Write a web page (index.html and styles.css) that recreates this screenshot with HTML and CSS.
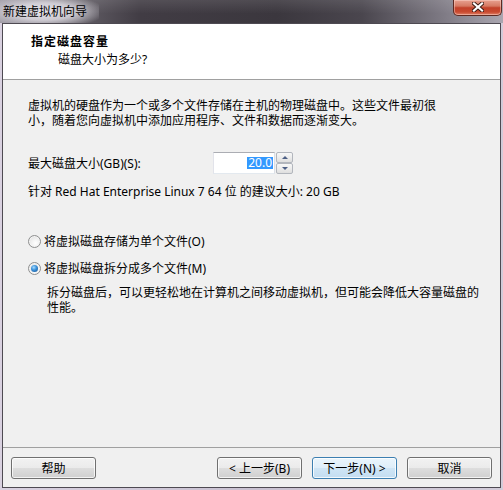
FILE: index.html
```html
<!DOCTYPE html>
<html lang="zh-CN">
<head>
<meta charset="utf-8">
<title>新建虚拟机向导</title>
<link rel="stylesheet" href="styles.css">
</head>
<body>
<div class="window">
  <div class="titlebar">
    <div class="title">新建虚拟机向导</div>
    <div class="close">
      <svg width="12" height="10" viewBox="0 0 12 10">
        <path d="M2 1.5 L10 8.5 M10 1.5 L2 8.5" stroke="#3a1a14" stroke-width="4" stroke-linecap="square"/>
        <path d="M2 1.5 L10 8.5 M10 1.5 L2 8.5" stroke="#ffffff" stroke-width="2.2" stroke-linecap="square"/>
      </svg>
    </div>
  </div>
  <div class="client">
    <div class="header">
      <div class="h-title">指定磁盘容量</div>
      <div class="h-sub">磁盘大小为多少?</div>
    </div>
    <div class="content">
      <p class="para">虚拟机的硬盘作为一个或多个文件存储在主机的物理磁盘中。这些文件最初很<br>小，随着您向虚拟机中添加应用程序、文件和数据而逐渐变大。</p>
      <div class="size-row">
        <span class="size-label">最大磁盘大小(GB)(S):</span>
        <div class="spinner">
          <div class="spin-input"><span class="sel">20.0</span></div>
          <div class="spin-btns">
            <div class="sb"><span class="arrow up"></span></div>
            <div class="sb"><span class="arrow down"></span></div>
          </div>
        </div>
      </div>
      <p class="hint">针对 Red Hat Enterprise Linux 7 64 位 的建议大小: 20 GB</p>
      <div class="opt opt-first"><span class="radio"></span><span>将虚拟磁盘存储为单个文件(O)</span></div>
      <div class="opt opt-second"><span class="radio checked"></span><span>将虚拟磁盘拆分成多个文件(M)</span></div>
      <p class="desc">拆分磁盘后，可以更轻松地在计算机之间移动虚拟机，但可能会降低大容量磁盘的<br>性能。</p>
    </div>
    <div class="footer">
      <button class="btn help">帮助</button>
      <button class="btn">&lt; 上一步(B)</button>
      <button class="btn default">下一步(N) &gt;</button>
      <button class="btn">取消</button>
    </div>
  </div>
</div>
</body>
</html>
```

FILE: styles.css
```css
html, body {
  margin: 0;
  padding: 0;
}

body {
  font-family: "Noto Sans", "Noto Sans CJK SC", sans-serif;
  font-size: 12px;
  line-height: 15px;
  color: #000;
  background: #cfc8d6;
}

.window {
  width: 503px;
  height: 490px;
  box-sizing: border-box;
  padding: 0 2px 2px 2px;
  display: flex;
  flex-direction: column;
  background: linear-gradient(90deg, #d9d1e0 0%, #c9c1d1 50%, #d2cbd8 100%);
}

.titlebar {
  height: 23px;
  margin: 0 -2px;
  padding-right: 1px;
  display: flex;
  align-items: flex-start;
  background:
    linear-gradient(180deg, rgba(255,255,255,0.10) 0%, rgba(255,255,255,0) 60%),
    linear-gradient(90deg, #9c98a2 0%, #6c6870 12%, #413c44 28%, #3b373e 55%, #4a464e 72%, #7e7a84 88%, #aaa6b0 100%);
}

.title {
  height: 23px;
  box-sizing: border-box;
  padding: 4px 12px 0 3px;
  color: #000;
  background: radial-gradient(ellipse 62% 75% at 45% 50%, rgba(236,234,240,0.97) 0%, rgba(226,223,230,0.8) 50%, rgba(210,206,214,0) 100%);
}

.close {
  margin-left: auto;
  width: 49px;
  height: 16px;
  box-sizing: border-box;
  border: 1px solid #5e2a22;
  border-top: none;
  border-radius: 0 0 5px 5px;
  display: flex;
  align-items: center;
  justify-content: center;
  padding-bottom: 2px;
  background: linear-gradient(180deg, #e7a190 0%, #d67a63 40%, #c2412a 52%, #c94a30 80%, #e0836a 100%);
  box-shadow: inset 0 0 0 1px rgba(255,220,210,0.45);
}

.client {
  flex: 1;
  display: flex;
  flex-direction: column;
  border: 1px solid #4e4a52;
  background: #f0f0f0;
  min-height: 0;
}

.header {
  height: 56px;
  box-sizing: border-box;
  background: #fff;
  border-bottom: 1px solid #a0a0a0;
  padding: 10px 0 0 28px;
}

.h-title {
  font-weight: bold;
  letter-spacing: 1px;
}

.h-sub {
  margin-top: 3px;
  padding-left: 27px;
}

.content {
  flex: 1;
  padding: 18px 0 0 25px;
}

.para, .hint, .desc {
  margin: 0;
}

.para, .desc {
  font-family: "Liberation Sans", "Noto Sans CJK SC", sans-serif;
}

.para {
  padding-top: 1px;
}

.size-row {
  margin-top: 23px;
  height: 22px;
  display: flex;
  align-items: center;
}

.size-label {
  width: 185px;
}

.spinner {
  display: flex;
  height: 22px;
}

.spin-input {
  width: 62px;
  height: 22px;
  box-sizing: border-box;
  border: 1px solid;
  border-color: #abadb3 #dbdfe6 #e3e9ef #e2e3ea;
  background: #fff;
  display: flex;
  align-items: center;
  justify-content: flex-end;
  padding-right: 1px;
}

.sel {
  background: #3399ff;
  color: #fff;
  line-height: 12px;
  padding: 0 1px;
}

.spin-btns {
  display: flex;
  flex-direction: column;
  margin-left: 1px;
}

.sb {
  width: 17px;
  height: 11px;
  box-sizing: border-box;
  border: 1px solid #b2b6bd;
  border-radius: 2px;
  background: linear-gradient(180deg, #f7f7f7 0%, #ececec 50%, #dedede 100%);
  display: flex;
  align-items: center;
  justify-content: center;
}

.arrow {
  width: 0;
  height: 0;
  border-left: 3.5px solid transparent;
  border-right: 3.5px solid transparent;
}

.arrow.up {
  border-bottom: 3px solid #4c5f85;
}

.arrow.down {
  border-top: 3px solid #4c5f85;
}

.hint {
  margin-top: 10px;
}

.opt {
  display: flex;
  align-items: center;
  height: 15px;
}

.opt-first {
  margin-top: 35px;
}

.opt-second {
  margin-top: 12px;
}

.radio {
  width: 13px;
  height: 13px;
  box-sizing: border-box;
  border-radius: 50%;
  border: 1px solid #8e8f8f;
  margin-right: 3px;
  background: radial-gradient(circle at 60% 65%, #ffffff 0%, #f2f2f2 40%, #d8d8d8 100%);
  box-shadow: inset 0 0 0 1px #f4f4f4;
  display: flex;
  align-items: center;
  justify-content: center;
}

.radio.checked::after {
  content: "";
  width: 7px;
  height: 7px;
  border-radius: 50%;
  background: radial-gradient(circle at 40% 35%, #a9dcff 0%, #3f95dc 40%, #0f4c8f 100%);
}

.desc {
  margin-top: 9px;
  padding-top: 1px;
  padding-left: 19px;
}

.footer {
  height: 40px;
  box-sizing: border-box;
  border-top: 1px solid #a0a0a0;
  padding: 9px 8px 8px 8px;
  display: flex;
  gap: 10px;
}

.btn {
  width: 85px;
  height: 22px;
  box-sizing: border-box;
  padding: 0;
  font-family: "Noto Sans", "Noto Sans CJK SC", sans-serif;
  font-size: 12px;
  line-height: 15px;
  color: #000;
  border: 1px solid #707070;
  border-radius: 3px;
  background: linear-gradient(180deg, #f2f2f2 0%, #ebebeb 48%, #dddddd 52%, #cfcfcf 100%);
  box-shadow: inset 0 0 0 1px rgba(255,255,255,0.75);
}

.btn.help {
  margin-right: auto;
}

.btn.default {
  border-color: #3c7fb1;
  background: linear-gradient(180deg, #eaf5fc 0%, #dfeef9 48%, #cfe5f5 52%, #c3ddf1 100%);
  box-shadow: inset 0 0 0 1px rgba(255,255,255,0.8);
}
```
